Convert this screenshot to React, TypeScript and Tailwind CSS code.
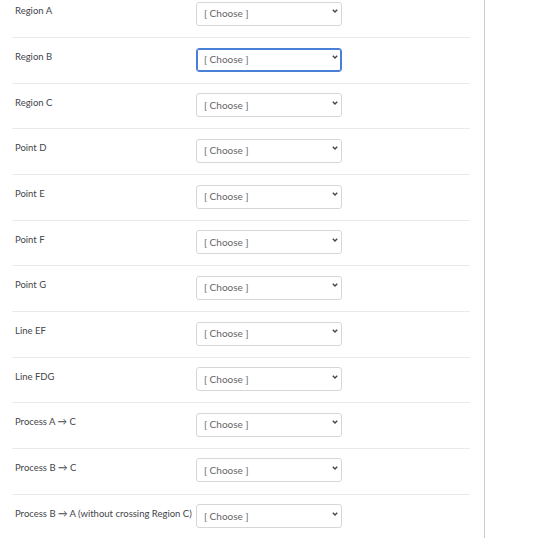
const rows = [
  "Region A",
  "Region B",
  "Region C",
  "Point D",
  "Point E",
  "Point F",
  "Point G",
  "Line EF",
  "Line FDG",
  "Process A → C",
  "Process B → C",
  "Process B → A (without crossing Region C)",
];

const App = () => {
  return (
    <div className="flex h-screen w-screen overflow-hidden bg-white" style={{ fontFamily: "Lato, 'Liberation Sans', sans-serif" }}>
      <div className="h-full w-[485px] shrink-0 border-r border-[#c7cdd1] pl-3 pr-[14px]">
        {/* question rows */}
        <div className="-mt-[7.6px] flex flex-col">
          {rows.map((label, i) => (
            <div key={label} className="flex h-[45.67px] shrink-0 border-b border-[#e8eaec]">
              <div className="w-[184px] whitespace-nowrap pl-[3px] pt-[11px] text-[9.5px] leading-[16px] text-[#3f4549]">{label}</div>
              <div className="relative mt-[7px] h-[24px] w-[146px]">
                <select
                  defaultValue=""
                  className={
                    "h-full w-full appearance-none rounded-[3px] border bg-white pl-[7px] text-[10px] text-[#666] outline-none " +
                    (i === 1 ? "border-[#4a7fd8] shadow-[inset_0_0_0_1px_#4a7fd8]" : "border-[#d4d8db]")
                  }
                >
                  <option value="">[ Choose ]</option>
                </select>
                <svg className="pointer-events-none absolute right-[4px] top-[10px]" width="6" height="4" viewBox="0 0 6 4">
                  <path d="M0.8 0.8 L3 3 L5.2 0.8" fill="none" stroke="#444" strokeWidth="1.4" />
                </svg>
              </div>
            </div>
          ))}
        </div>
      </div>
    </div>
  );
};

export default App;
